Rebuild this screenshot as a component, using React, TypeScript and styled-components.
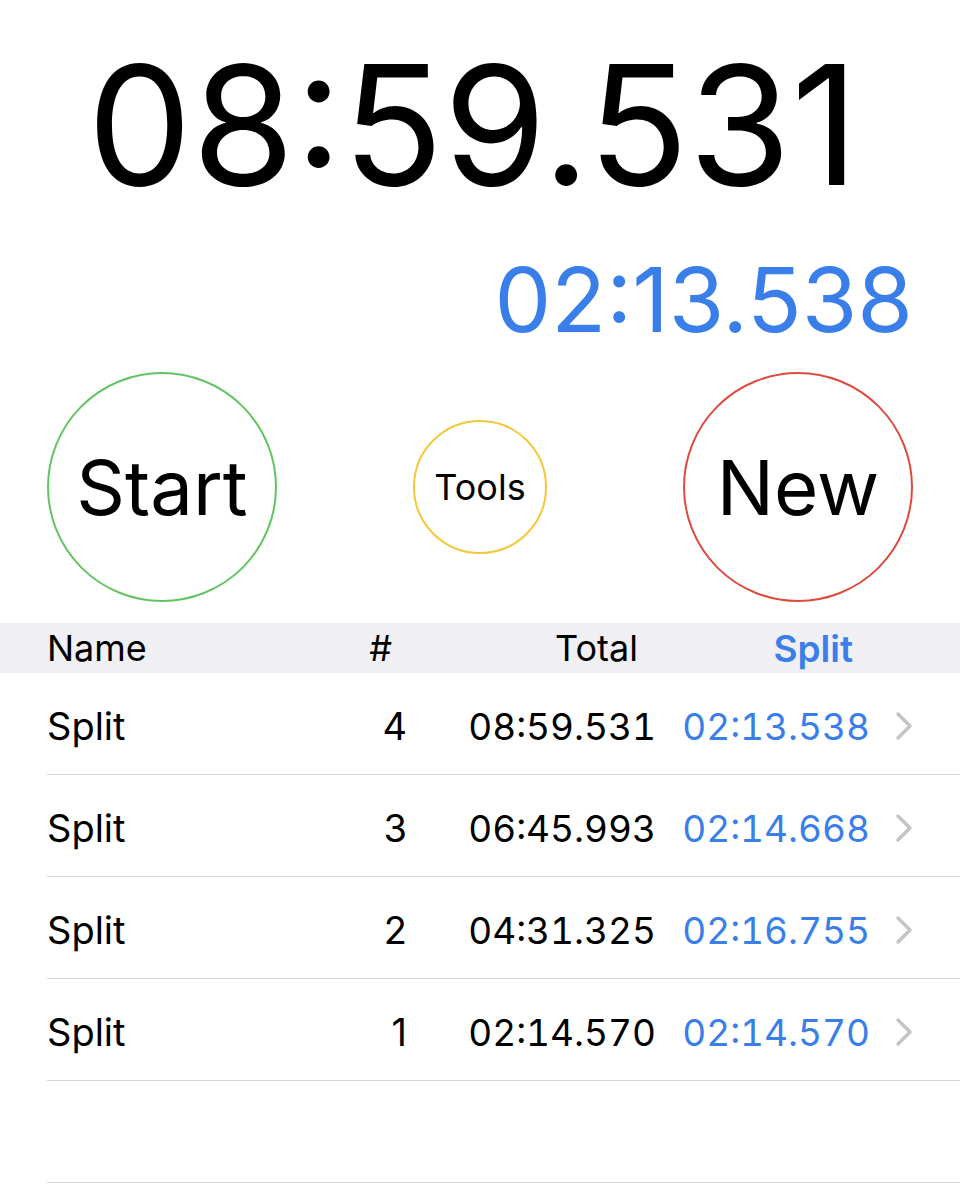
import styled, { createGlobalStyle } from 'styled-components'

const Colors = {
	Blue: '#3a7fe9',
	Green: '#62c462',
	Yellow: '#f2c83c',
	Red: '#dd4a3e',
	HeaderBg: '#efeff4',
	Separator: '#d6d6da',
	Chevron: '#c4c4c8',
}

const splits = [
	{ name: 'Split', num: 4, total: '08:59.531', split: '02:13.538' },
	{ name: 'Split', num: 3, total: '06:45.993', split: '02:14.668' },
	{ name: 'Split', num: 2, total: '04:31.325', split: '02:16.755' },
	{ name: 'Split', num: 1, total: '02:14.570', split: '02:14.570' },
]

const GlobalStyle = createGlobalStyle`
	html, body {
		margin: 0;
		padding: 0;
		background: #fff;
	}
	body {
		font-family: Inter, "Liberation Sans", sans-serif;
		color: #000;
	}
`

function Chevron() {
	return (
		<svg width={18} height={30} viewBox="0 0 18 30">
			<polyline points="3,3 15,15 3,27" fill="none" stroke={Colors.Chevron} strokeWidth={3.4} strokeLinecap="round" strokeLinejoin="round" />
		</svg>
	)
}

export default function App() {
	return (
		<Page>
			<GlobalStyle />
			<MainTime>08:59.531</MainTime>
			<LapTime>02:13.538</LapTime>
			<Controls>
				<RoundButton $size={230} $color={Colors.Green} $font={76}>
					Start
				</RoundButton>
				<RoundButton $size={134} $color={Colors.Yellow} $font={36}>
					Tools
				</RoundButton>
				<RoundButton $size={230} $color={Colors.Red} $font={76}>
					New
				</RoundButton>
			</Controls>
			<TableHeader>
				<HeadCell>Name</HeadCell>
				<HeadCell $right>#</HeadCell>
				<HeadCell $right>Total</HeadCell>
				<HeadCell $right $active>
					Split
				</HeadCell>
			</TableHeader>
			<List>
				{splits.map((s) => (
					<Row key={s.num}>
						<Cell>{s.name}</Cell>
						<Cell $right>{s.num}</Cell>
						<Cell $right $digits>
							{s.total}
						</Cell>
						<Cell $right $digits $blue>
							{s.split}
						</Cell>
						<ChevronCell>
							<Chevron />
						</ChevronCell>
					</Row>
				))}
				<Row />
			</List>
		</Page>
	)
}

const Page = styled.div`
	width: 960px;
	height: 1200px;
	overflow: hidden;
	background: #fff;
`
const MainTime = styled.div`
	padding-top: 42px;
	padding-right: 14px;
	font-size: 166px;
	line-height: 166px;
	text-align: center;
`
const LapTime = styled.div`
	margin-top: 47px;
	padding-right: 47px;
	font-size: 90px;
	line-height: 90px;
	text-align: right;
	color: ${Colors.Blue};
`
const Controls = styled.div`
	display: flex;
	align-items: center;
	justify-content: space-between;
	padding: 0 47px;
	margin-top: 27px;
	height: 230px;
`
const RoundButton = styled.button<{ $size: number; $color: string; $font: number }>`
	box-sizing: border-box;
	width: ${({ $size }) => $size}px;
	height: ${({ $size }) => $size}px;
	border-radius: 50%;
	border: 2px solid ${({ $color }) => $color};
	background: #fff;
	padding: 0;
	font-family: Inter, "Liberation Sans", sans-serif;
	font-size: ${({ $font }) => $font}px;
	color: #000;
	display: flex;
	align-items: center;
	justify-content: center;
`
const TableHeader = styled.div`
	margin-top: 21px;
	height: 50px;
	background: ${Colors.HeaderBg};
	display: grid;
	grid-template-columns: 300px 45px 246px 215px 1fr;
	align-items: center;
	padding-left: 47px;
	font-size: 36px;
`
const HeadCell = styled.div<{ $right?: boolean; $active?: boolean }>`
	text-align: ${({ $right }) => ($right ? 'right' : 'left')};
	color: ${({ $active }) => ($active ? Colors.Blue : '#000')};
	font-weight: ${({ $active }) => ($active ? 600 : 400)};
	font-size: ${({ $active }) => ($active ? 37 : 36)}px;
`
const List = styled.div`
	margin-left: 47px;
`
const Row = styled.div`
	box-sizing: border-box;
	height: 102px;
	padding-top: 5px;
	border-bottom: 1.5px solid ${Colors.Separator};
	display: grid;
	grid-template-columns: 300px 60px 249px 214px 1fr;
	align-items: center;
	font-size: 38px;
`
const Cell = styled.div<{ $right?: boolean; $blue?: boolean; $digits?: boolean }>`
	text-align: ${({ $right }) => ($right ? 'right' : 'left')};
	color: ${({ $blue }) => ($blue ? Colors.Blue : '#000')};
	font-size: ${({ $digits }) => ($digits ? 37 : 38)}px;
	font-variant-numeric: ${({ $digits }) => ($digits ? 'tabular-nums' : 'normal')};
`
const ChevronCell = styled.div`
	display: flex;
	align-items: center;
	padding-left: 25px;
`
